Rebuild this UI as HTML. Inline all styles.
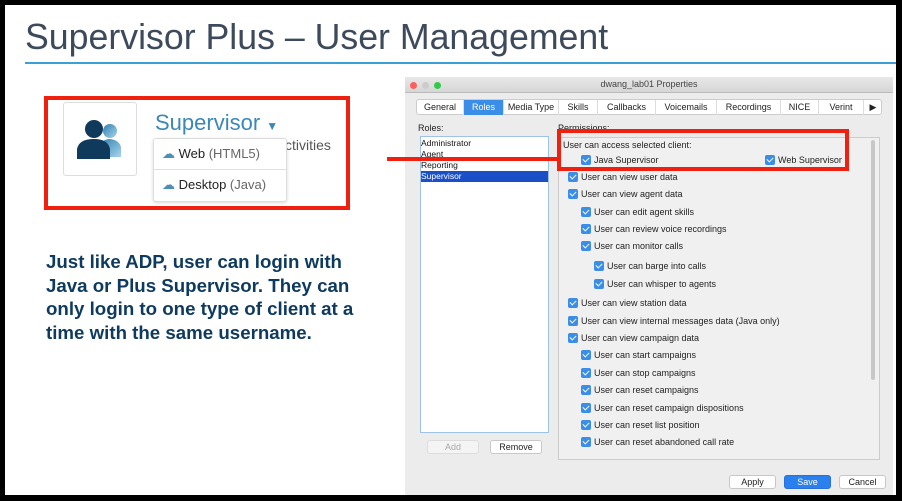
<!DOCTYPE html>
<html><head><meta charset="utf-8"><style>
*{margin:0;padding:0;box-sizing:border-box}
body{width:902px;height:501px;background:#000;position:relative;overflow:hidden;font-family:"Liberation Sans",sans-serif}
.a{position:absolute}
.cb{position:absolute;width:10px;height:10px;background:#3b8ee8;border-radius:2px}
.cb:after{content:"";position:absolute;left:3px;top:1px;width:3px;height:5px;border:solid #fff;border-width:0 1.5px 1.5px 0;transform:rotate(45deg)}
.t{position:absolute;font-size:9px;color:#222;white-space:nowrap;line-height:10px}
.tab{position:absolute;top:0;height:15px;font-size:9px;line-height:15px;text-align:center;color:#222;border-right:1px solid #ddd}
.btn{position:absolute;height:14px;font-size:9px;line-height:13px;text-align:center;background:#fff;border:1px solid #c8c8c8;border-radius:3px;color:#222}
</style></head><body>
<div class="a" style="left:5px;top:5px;width:891px;height:490px;background:#fff"></div>
<div class="a" style="left:25px;top:17px;font-size:35.7px;color:#3d4a5c;line-height:40px;white-space:nowrap">Supervisor Plus – User Management</div>
<div class="a" style="left:25px;top:62px;width:871px;height:2px;background:#3aa0d5"></div>

<div class="a" style="left:44px;top:96px;width:306px;height:114px;border:4px solid #f02010"></div>
<div class="a" style="left:63px;top:102px;width:74px;height:74px;border:1px solid #ddd;border-radius:3px;background:#fff">
<svg width="74" height="74" viewBox="0 0 74 74"><defs><linearGradient id="g" x1="0" y1="0" x2="1" y2="1"><stop offset="0" stop-color="#2f7fb0"/><stop offset="1" stop-color="#a8d4ec"/></linearGradient></defs>
<circle cx="46" cy="28" r="7" fill="url(#g)"/><path d="M36 54 L36 44 Q38 36 46 36 Q55 37 57 44 L57 54Z" fill="url(#g)"/>
<circle cx="30" cy="26" r="9" fill="#0f3a5c"/><path d="M13 56 L13 46 Q15 36 30 36 Q44 36 46 46 L46 56Z" fill="#0f3a5c"/></svg></div>
<div class="a" style="left:155px;top:110px;font-size:22px;color:#3a87b8;white-space:nowrap">Supervisor <span style="font-size:12px">▼</span></div>
<div class="a" style="left:285px;top:137px;font-size:14px;color:#555">ctivities</div>
<div class="a" style="left:153px;top:138px;width:134px;height:64px;background:#fff;border:1px solid #ddd;border-radius:3px;box-shadow:0 1px 3px rgba(0,0,0,.15)"></div>
<div class="a" style="left:153px;top:169px;width:134px;height:1px;background:#e0e0e0"></div>
<div class="a" style="left:162px;top:146px;font-size:13px;color:#222;white-space:nowrap"><span style="color:#4a8fb5">☁</span> Web <span style="color:#666">(HTML5)</span></div>
<div class="a" style="left:162px;top:177px;font-size:13px;color:#222;white-space:nowrap"><span style="color:#4a8fb5">☁</span> Desktop <span style="color:#666">(Java)</span></div>

<div class="a" style="left:46px;top:250px;font-size:18.7px;font-weight:bold;color:#0d3a5e;line-height:23.5px;white-space:nowrap">Just like ADP, user can login with<br>Java or Plus Supervisor. They can<br>only login to one type of client at a<br>time with the same username.</div>

<div class="a" style="left:405px;top:77px;width:488px;height:418px;background:#ececec"></div>
<div class="a" style="left:405px;top:77px;width:488px;height:16px;background:linear-gradient(#e8e8e8,#d6d6d6);border-bottom:1px solid #bbb"></div>
<div class="a" style="left:410px;top:82px;width:7px;height:7px;border-radius:50%;background:#fc605c"></div>
<div class="a" style="left:422px;top:82px;width:7px;height:7px;border-radius:50%;background:#ccc"></div>
<div class="a" style="left:434px;top:82px;width:7px;height:7px;border-radius:50%;background:#34c84a"></div>
<div class="a" style="left:405px;top:79px;width:488px;text-align:center;font-size:9px;color:#444">dwang_lab01 Properties</div>
<div class="a" style="left:416px;top:99px;width:466px;height:16px;background:#fff;border:1px solid #ccc;border-radius:3px">
<div class="tab" style="left:0;width:47px">General</div>
<div class="tab" style="left:47px;width:40px;background:#3b8ee8;color:#fff">Roles</div>
<div class="tab" style="left:87px;width:55px">Media Type</div>
<div class="tab" style="left:142px;width:39px">Skills</div>
<div class="tab" style="left:181px;width:58px">Callbacks</div>
<div class="tab" style="left:239px;width:61px">Voicemails</div>
<div class="tab" style="left:300px;width:64px">Recordings</div>
<div class="tab" style="left:364px;width:38px">NICE</div>
<div class="tab" style="left:402px;width:45px">Verint</div>
<div class="tab" style="left:447px;width:18px;border:none">▶</div></div>
<div class="a" style="left:418px;top:123px;font-size:9px;color:#222">Roles:</div>
<div class="a" style="left:558px;top:123px;font-size:9px;color:#222">Permissions:</div>
<div class="a" style="left:420px;top:136px;width:129px;height:297px;background:#fff;border:1px solid #9ec3e6"></div>
<div class="a" style="left:421px;top:138px;font-size:8.5px;line-height:11px;color:#111;width:127px">Administrator<br>Agent<br>Reporting<br><div style="background:#1a4fc8;color:#fff">Supervisor</div></div>
<div class="btn" style="left:427px;top:440px;width:52px;color:#aaa;border-color:#ddd;background:#f4f4f4">Add</div>
<div class="btn" style="left:490px;top:440px;width:52px">Remove</div>
<div class="a" style="left:558px;top:137px;width:322px;height:323px;background:#f0f0f0;border:1px solid #ccc"></div>
<div class="a" style="left:871px;top:140px;width:4px;height:240px;background:#c8c8c8;border-radius:2px"></div>
<div class="t" style="left:563px;top:140px">User can access selected client:</div>
<div class="cb" style="left:581px;top:155px"></div><div class="t" style="left:594px;top:155px">Java Supervisor</div>
<div class="cb" style="left:765px;top:155px"></div><div class="t" style="left:778px;top:155px">Web Supervisor</div>
<div class="cb" style="left:568px;top:172px"></div><div class="t" style="left:581px;top:172px">User can view user data</div>
<div class="cb" style="left:568px;top:189px"></div><div class="t" style="left:581px;top:189px">User can view agent data</div>
<div class="cb" style="left:581px;top:207px"></div><div class="t" style="left:594px;top:207px">User can edit agent skills</div>
<div class="cb" style="left:581px;top:224px"></div><div class="t" style="left:594px;top:224px">User can review voice recordings</div>
<div class="cb" style="left:581px;top:241px"></div><div class="t" style="left:594px;top:241px">User can monitor calls</div>
<div class="cb" style="left:594px;top:261px"></div><div class="t" style="left:607px;top:261px">User can barge into calls</div>
<div class="cb" style="left:594px;top:279px"></div><div class="t" style="left:607px;top:279px">User can whisper to agents</div>
<div class="cb" style="left:568px;top:298px"></div><div class="t" style="left:581px;top:298px">User can view station data</div>
<div class="cb" style="left:568px;top:316px"></div><div class="t" style="left:581px;top:316px">User can view internal messages data (Java only)</div>
<div class="cb" style="left:568px;top:333px"></div><div class="t" style="left:581px;top:333px">User can view campaign data</div>
<div class="cb" style="left:581px;top:350px"></div><div class="t" style="left:594px;top:350px">User can start campaigns</div>
<div class="cb" style="left:581px;top:368px"></div><div class="t" style="left:594px;top:368px">User can stop campaigns</div>
<div class="cb" style="left:581px;top:385px"></div><div class="t" style="left:594px;top:385px">User can reset campaigns</div>
<div class="cb" style="left:581px;top:403px"></div><div class="t" style="left:594px;top:403px">User can reset campaign dispositions</div>
<div class="cb" style="left:581px;top:420px"></div><div class="t" style="left:594px;top:420px">User can reset list position</div>
<div class="cb" style="left:581px;top:437px"></div><div class="t" style="left:594px;top:437px">User can reset abandoned call rate</div>
<div class="btn" style="left:729px;top:475px;width:47px">Apply</div>
<div class="btn" style="left:784px;top:475px;width:47px;background:#2a80ee;border-color:#2a70d8;color:#fff">Save</div>
<div class="btn" style="left:839px;top:475px;width:47px">Cancel</div>

<div class="a" style="left:387px;top:157px;width:172px;height:4px;background:#f02010"></div>
<div class="a" style="left:557px;top:129px;width:292px;height:42px;border:4px solid #f02010"></div>
</body></html>
